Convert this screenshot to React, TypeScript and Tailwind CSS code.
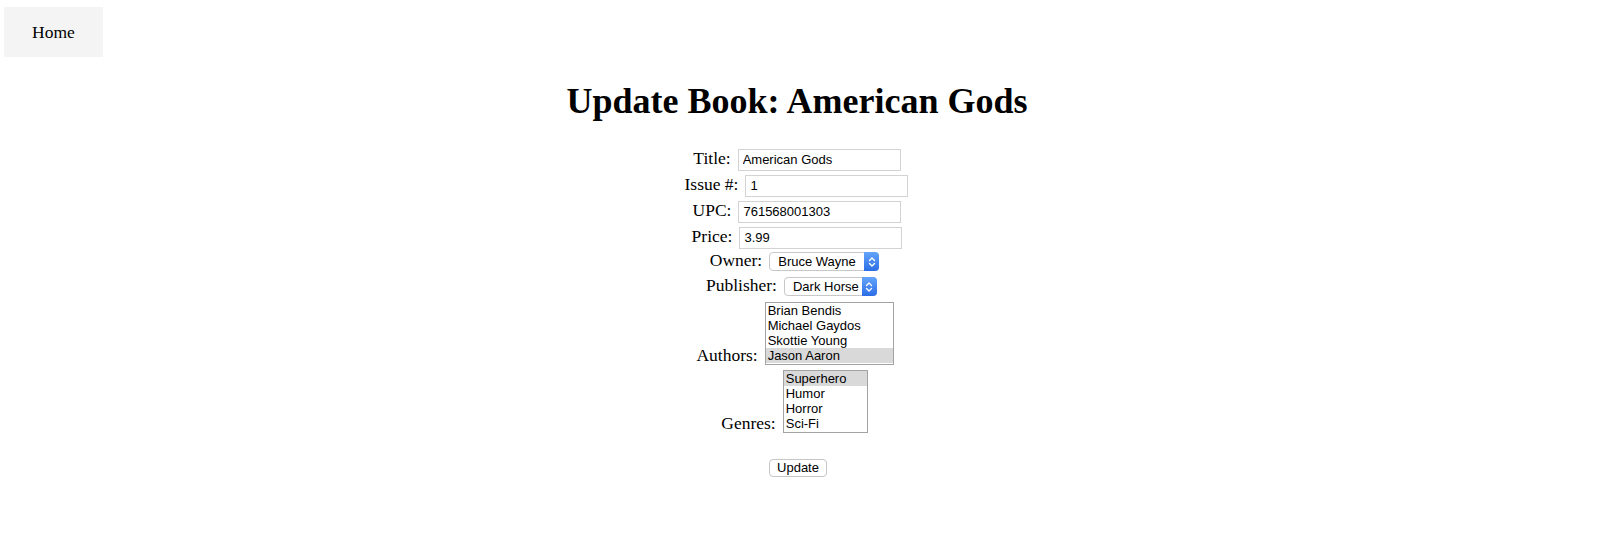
import React from 'react';

// Form controls mimic the default Safari look of the original page
const Label = ({children}: {children: React.ReactNode}) => (
  <label className="text-[17.5px] leading-[20px] text-black font-['Liberation_Serif','Times_New_Roman',serif]">{children}</label>
);

const TextInput = ({value, className = ''}: {value: string; className?: string}) => (
  <input
    type="text"
    defaultValue={value}
    className={`w-[163px] h-[22px] px-[4px] py-0 border border-[#d3d3d3] bg-white text-[13px] text-black font-['Liberation_Sans',Arial,sans-serif] outline-none ${className}`}
  />
);

const DropDown = ({value, className = ''}: {value: string; className?: string}) => (
  <span
    className={`relative inline-flex items-center h-[19px] pl-[8px] border border-[#c8c8c8] rounded-[4px] bg-white text-[13px] text-black font-['Liberation_Sans',Arial,sans-serif] ${className}`}>
    {value}
    <span className="absolute right-[-1px] top-[-1px] bottom-[-1px] w-[15px] rounded-r-[4px] bg-gradient-to-b from-[#64a4fb] to-[#2c6de6] flex items-center justify-center">
      <svg viewBox="0 0 8 12" className="w-[8px] h-[12px]" fill="none" stroke="white" strokeWidth="1.4" strokeLinecap="round" strokeLinejoin="round">
        <path d="M1.5 4.5 4 2l2.5 2.5"/>
        <path d="M1.5 7.5 4 10l2.5-2.5"/>
      </svg>
    </span>
  </span>
);

const ListBox = ({items, selected, className = ''}: {items: string[]; selected: string; className?: string}) => (
  <div role="listbox" className={`h-[63px] border border-[#a3a3a3] bg-white overflow-hidden text-[13px] text-black font-['Liberation_Sans',Arial,sans-serif] ${className}`}>
    {items.map((item) => (
      <div key={item} className={`h-[15px] leading-[15px] pl-[2px] whitespace-nowrap ${item === selected ? 'bg-[#d9d9d9]' : ''}`}>
        {item}
      </div>
    ))}
  </div>
);

const App = () => {
  return (
    <div className="w-[1600px] min-h-[536px] bg-white font-['Liberation_Serif','Times_New_Roman',serif]">
      {/* Nav */}
      <div className="pt-[7px] pl-[4px]">
        <a className="flex items-center justify-center w-[99px] h-[50px] bg-[#f4f4f4] text-[17.5px] text-black">Home</a>
      </div>

      <div className="flex flex-col items-center pr-[6px]">
        <h1 className="mt-[24px] mb-[27px] text-[36px] leading-[40px] font-bold text-black">Update Book: American Gods</h1>

        <div className="flex items-baseline gap-[7px] h-[26px]">
          <Label>Title:</Label>
          <TextInput value="American Gods"/>
        </div>
        <div className="flex items-baseline gap-[7px] h-[26px]">
          <Label>Issue #:</Label>
          <TextInput value="1" className="mr-[1px]"/>
        </div>
        <div className="flex items-baseline gap-[7px] h-[26px]">
          <Label>UPC:</Label>
          <TextInput value="761568001303"/>
        </div>
        <div className="flex items-baseline gap-[7px] h-[24px]">
          <Label>Price:</Label>
          <TextInput value="3.99"/>
        </div>
        <div className="flex items-baseline gap-[7px] h-[25px]">
          <Label>Owner:</Label>
          <DropDown value="Bruce Wayne" className="w-[110px] mr-[5px]"/>
        </div>
        <div className="flex items-baseline gap-[7px] h-[25px]">
          <Label>Publisher:</Label>
          <DropDown value="Dark Horse" className="w-[93px] mr-[11px]"/>
        </div>
        <div className="flex items-end gap-[7px] mt-[2px]">
          <Label>Authors:</Label>
          <ListBox
            items={['Brian Bendis', 'Michael Gaydos', 'Skottie Young', 'Jason Aaron']}
            selected="Jason Aaron"
            className="w-[129px] mr-[4px]"
          />
        </div>
        <div className="flex items-end gap-[7px] mt-[5px]">
          <Label>Genres:</Label>
          <ListBox
            items={['Superhero', 'Humor', 'Horror', 'Sci-Fi']}
            selected="Superhero"
            className="w-[85px] mr-[5px]"
          />
        </div>

        <button className="mt-[26px] ml-[2px] w-[58px] h-[18px] border border-[#c6c6c6] rounded-[4px] bg-white text-[13px] leading-[16px] text-black font-['Liberation_Sans',Arial,sans-serif]">
          Update
        </button>
      </div>
    </div>
  );
};

export default App;
